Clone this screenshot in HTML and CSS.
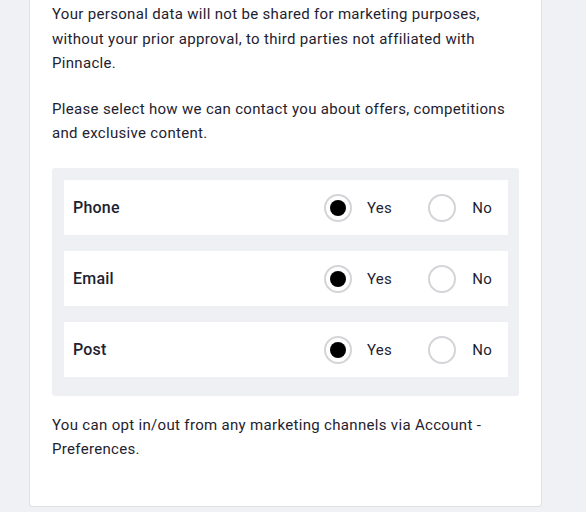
FILE: index.html
```html
<!DOCTYPE html>
<html lang="en">
<head>
<meta charset="utf-8">
<title>Marketing preferences</title>
<link rel="stylesheet" href="styles.css">
</head>
<body>
<div class="page">
  <section class="card">
    <p class="text">Your personal data will not be shared for marketing purposes, without your prior approval, to third parties not affiliated with Pinnacle.</p>
    <p class="text">Please select how we can contact you about offers, competitions and exclusive content.</p>
    <div class="channels">
      <div class="row">
        <span class="label">Phone</span>
        <div class="options">
          <label class="option"><span class="radio checked"></span><span>Yes</span></label>
          <label class="option"><span class="radio"></span><span>No</span></label>
        </div>
      </div>
      <div class="row">
        <span class="label">Email</span>
        <div class="options">
          <label class="option"><span class="radio checked"></span><span>Yes</span></label>
          <label class="option"><span class="radio"></span><span>No</span></label>
        </div>
      </div>
      <div class="row">
        <span class="label">Post</span>
        <div class="options">
          <label class="option"><span class="radio checked"></span><span>Yes</span></label>
          <label class="option"><span class="radio"></span><span>No</span></label>
        </div>
      </div>
    </div>
    <p class="text footer">You can opt in/out from any marketing channels via Account - Preferences.</p>
  </section>
</div>
</body>
</html>
```
FILE: styles.css
```css
html, body {
  margin: 0;
  padding: 0;
  background: #f0f1f5;
  font-family: Roboto, "Liberation Sans", sans-serif;
  color: #1e2230;
}

.page {
  padding: 0 44px 6px 29px;
}

.card {
  background: #ffffff;
  border: 1px solid #dfe0e4;
  border-top: 0;
  border-radius: 0 0 4px 4px;
  padding: 2px 22px 44px 22px;
}

.text {
  margin: 0;
  font-size: 15px;
  line-height: 24.5px;
  letter-spacing: 0.32px;
}

.text + .text {
  margin-top: 21px;
}

.channels {
  margin-top: 22.5px;
  background: #eff0f4;
  border-radius: 3px;
  padding: 12px 11px 19px 12px;
  display: flex;
  flex-direction: column;
  gap: 16px;
}

.row {
  background: #ffffff;
  height: 55px;
  display: flex;
  align-items: center;
  justify-content: space-between;
  padding: 0 16px 0 9px;
}

.label {
  font-size: 16px;
  font-weight: 500;
  letter-spacing: 0.2px;
}

.options {
  display: flex;
  align-items: center;
  gap: 36px;
}

.option {
  display: flex;
  align-items: center;
  gap: 15px;
  font-size: 15px;
  letter-spacing: 0.3px;
}

.option + .option {
  gap: 16px;
}

.radio {
  width: 24px;
  height: 24px;
  border: 2px solid #d4d5d8;
  border-radius: 50%;
  box-sizing: content-box;
  display: flex;
  align-items: center;
  justify-content: center;
  background: #fff;
}

.radio.checked::after {
  content: "";
  width: 16px;
  height: 16px;
  border-radius: 50%;
  background: #000;
}

.channels + .footer {
  margin-top: 16.5px;
}
```
